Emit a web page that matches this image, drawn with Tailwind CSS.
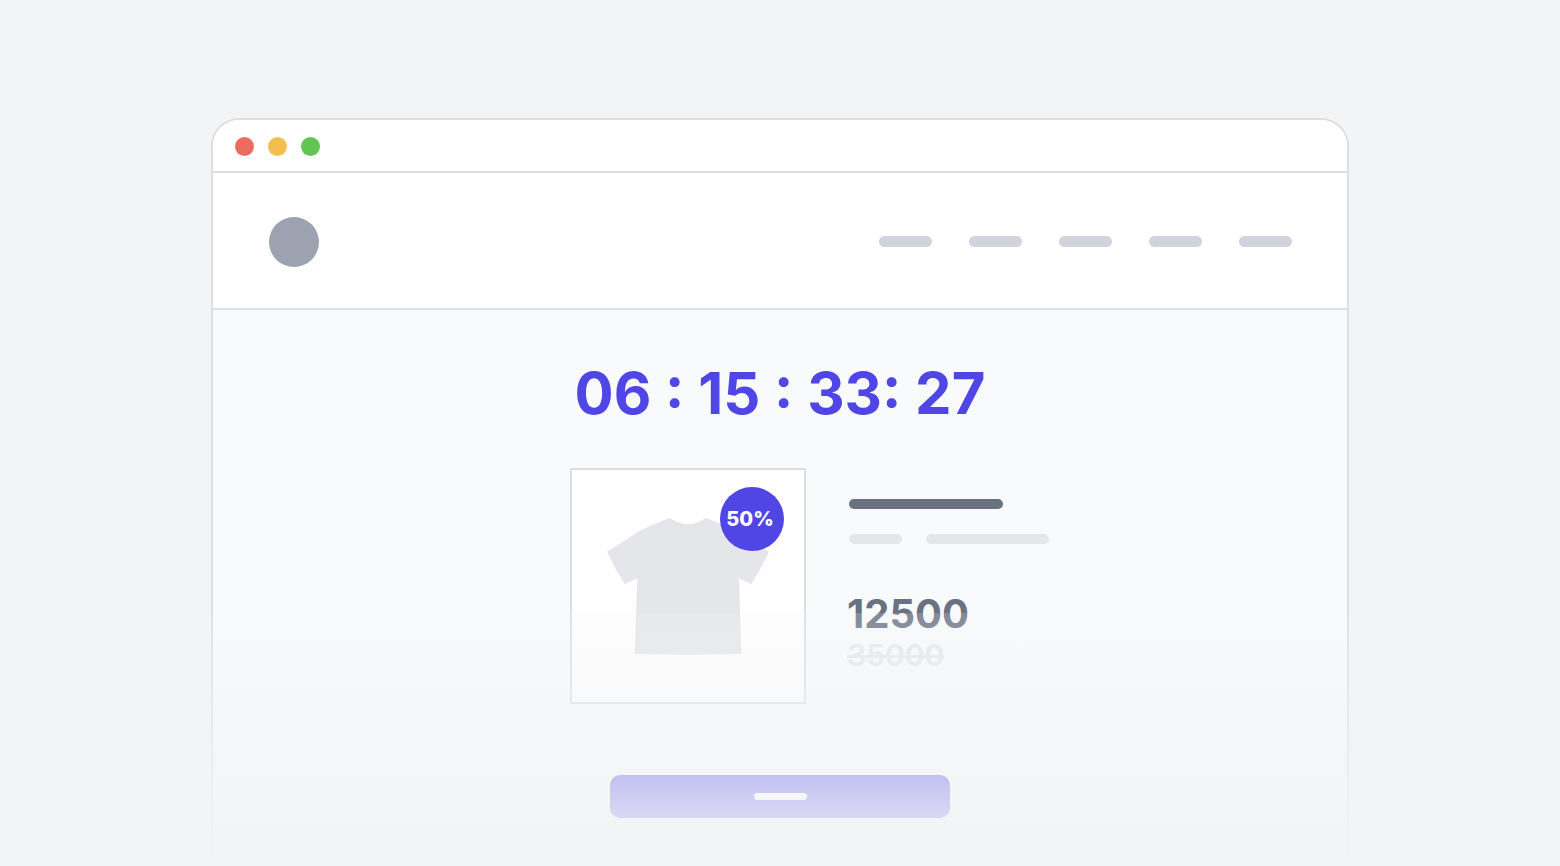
<!DOCTYPE html>
<html lang="en">
<head>
    <meta charset="UTF-8">
    <meta name="viewport" content="width=device-width, initial-scale=1.0">
    <title>Countdown Sale</title>
    <script src="https://cdn.jsdelivr.net/npm/@tailwindcss/browser@4"></script>
</head>
<body class="relative flex h-screen flex-col overflow-hidden bg-gray-100 pt-[118px] font-['Inter',sans-serif]">
    <!-- Browser window -->
    <div class="mx-auto flex w-full max-w-[1138px] grow flex-col overflow-hidden rounded-t-[28px] border-2 border-b-0 border-[#dddee0] bg-[#f9fafc]">
        <!-- Title bar -->
        <div class="flex gap-[14px] border-b-2 border-[#dddee0] bg-white px-[22px] pt-[17px] pb-[15px]">
            <span class="size-[19px] rounded-full bg-[#ed6a5e]"></span>
            <span class="size-[19px] rounded-full bg-[#f4be4f]"></span>
            <span class="size-[19px] rounded-full bg-[#61c554]"></span>
        </div>

        <!-- Header -->
        <header class="flex items-center justify-between border-b-2 border-[#dddee0] bg-white pt-11 pr-[55px] pb-[41px] pl-14">
            <a href="#" aria-label="Home" class="size-[50px] rounded-full bg-[#9ca2af]"></a>
            <nav class="flex gap-[37px] pb-[2px]">
                <a href="#" aria-label="Shop" class="h-[11px] w-[53px] rounded-full bg-[#d1d4dc]"></a>
                <a href="#" aria-label="New" class="h-[11px] w-[53px] rounded-full bg-[#d1d4dc]"></a>
                <a href="#" aria-label="Sale" class="h-[11px] w-[53px] rounded-full bg-[#d1d4dc]"></a>
                <a href="#" aria-label="About" class="h-[11px] w-[53px] rounded-full bg-[#d1d4dc]"></a>
                <a href="#" aria-label="Contact" class="h-[11px] w-[53px] rounded-full bg-[#d1d4dc]"></a>
            </nav>
        </header>

        <main class="mx-auto flex w-full max-w-[420px] flex-col items-center pt-[52px]">
            <!-- Timer -->
            <h1 class="text-[58px] leading-[62px] font-bold whitespace-nowrap text-[#4f46e5]">06 : 15 : 33: 27</h1>

            <!-- Product -->
            <div class="mt-11 flex w-full">
                <div class="relative flex size-[236px] shrink-0 items-center justify-center border-2 border-[#dddee0] bg-white">
                    <svg class="h-[137px] w-[162px] fill-[#e5e6ea]" viewBox="141 189 486 411" aria-hidden="true">
                        <path d="M141 290L240 227Q252 220 329 189Q357 207 384 207Q411 207 438 189Q516 220 528 227L627 290Q603 342 574 387L537 370L544 597Q384 602 224 597L232 370L194 387Q165 342 141 290Z"/>
                    </svg>
                    <span class="absolute top-[17px] right-5 flex size-16 items-center justify-center rounded-full bg-[#4f46e5] pr-1 text-[20px] font-extrabold text-white">50%</span>
                </div>
                <div class="ml-[43px] shrink-0 pt-[31px]">
                    <div class="h-[10px] w-[154px] rounded-full bg-gray-500"></div>
                    <div class="mt-[25px] flex gap-6">
                        <div class="h-[10px] w-[53px] rounded-full bg-[#e5e6ea]"></div>
                        <div class="h-[10px] w-[123px] rounded-full bg-[#e5e6ea]"></div>
                    </div>
                    <p class="-ml-[2px] mt-[46px] text-[40px] leading-12 font-bold text-gray-500">12500</p>
                    <p class="-ml-[2px] text-[30px] leading-[34px] font-semibold text-gray-200 line-through">35000</p>
                </div>
            </div>

            <!-- Buy button -->
            <button type="button" aria-label="Buy now" class="mt-[71px] flex h-[43px] w-[340px] items-center justify-center rounded-[10px] bg-[#4f46e5]">
                <span class="h-[7px] w-[53px] rounded-full bg-white"></span>
            </button>
        </main>
    </div>

    <!-- Bottom fade -->
    <div class="pointer-events-none absolute inset-x-0 bottom-0 h-[253px] bg-linear-to-b from-gray-100/18 to-gray-100"></div>
</body>
</html>
